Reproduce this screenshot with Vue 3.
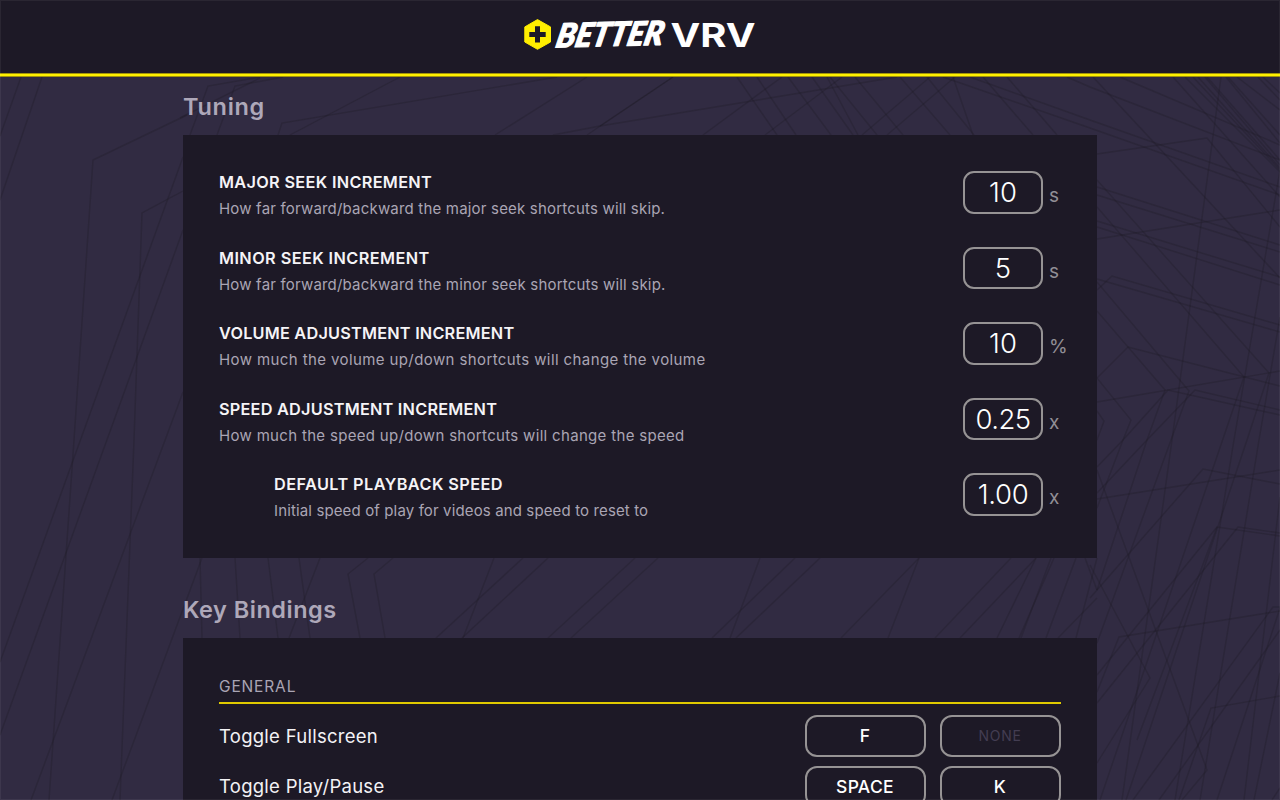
<script setup>
const tuning = [
  { title: 'MAJOR SEEK INCREMENT', text: 'How far forward/backward the major seek shortcuts will skip.', value: '10', unit: 's', k: 'a' },
  { title: 'MINOR SEEK INCREMENT', text: 'How far forward/backward the minor seek shortcuts will skip.', value: '5', unit: 's', k: 'b' },
  { title: 'VOLUME ADJUSTMENT INCREMENT', text: 'How much the volume up/down shortcuts will change the volume', value: '10', unit: '%', k: 'c' },
  { title: 'SPEED ADJUSTMENT INCREMENT', text: 'How much the speed up/down shortcuts will change the speed', value: '0.25', unit: 'x', k: 'd' },
  { title: 'DEFAULT PLAYBACK SPEED', text: 'Initial speed of play for videos and speed to reset to', value: '1.00', unit: 'x', k: 'e', nested: true },
]
const bindings = [
  { name: 'Toggle Fullscreen', keys: ['F', ''] },
  { name: 'Toggle Play/Pause', keys: ['SPACE', 'K'] },
]
const lines = [
  '21,77 0,136', '42,77 0,200', '187,115 93,160 74,440 49,800', '183,191 142,213 134,440 120,800',
  '183,157 0,662', '183,230 0,735', '183,392 31,800', '202,558 112,800',
  '190,135 208,86 260,77', '217,135 235,86 283,77', '400,77 290,135', '180,118 260,78',
  '278,135 282,123 557,77', '587,77 495,135', '673,77 587,135', '553,135 600,126 897,77',
  '600,126 673,77',
  '782,77 703,135', '842,77 765,135', '930,77 862,135', '955,77 887,135',
  '737,77 777,135', '757,77 796,135', '788,77 831,135', '812,77 853,135', '827,77 858,135',
  '830,77 877,135', '855,77 903,135', '900,77 950,135', '927,77 974,135', '953,77 973,135',
  '983,77 1033,135', '1007,77 1057,135', '943,77 1090,128 1280,195', '970,77 1090,120 1280,187',
  '1067,77 1090,87 1280,160', '1093,77 1280,278', '1120,77 1280,145',
  '1097,154 1207,138 1280,227', '1097,187 1280,245', '1097,195 1280,252', '1097,221 1280,277',
  '1097,227 1280,285', '1097,239 1280,210', '1097,290 1112,276 1280,325', '1097,279 1280,332',
  '1097,180 1269,373 1247,440 1126,800', '1097,207 1244,377 1226,430 1100,800',
  '1097,282 1189,391 1171,440 1097,643', '1097,311 1165,390 1147,440 1097,590',
  '1097,378 1131,420 1123,440 1097,508', '1097,411 1104,421 1097,440',
  '1097,378 1128,347 1280,386', '1097,402 1280,371', '1097,467 1123,440 1168,390 1280,415',
  '1097,493 1147,440 1195,390 1280,410', '1221,77 1172,440 1122,800', '1280,170 1234,440 1175,800',
  '1280,317 1259,440 1200,800', '1173,77 1280,197', '1185,77 1280,172', '1193,77 1280,170',
  '1198,77 1280,168', '1205,77 1280,165', '1207,77 1280,160', '1226,77 1280,143', '1228,77 1280,135',
  '1237,77 1280,110', '1258,77 1280,100', '1263,77 1280,93', '1097,499 1280,470',
  '1090,598 1203,469 1280,484', '1097,675 1217,527 1280,536', '1097,703 1238,527 1280,533',
  '1217,527 1137,740', '1085,558 1097,590', '1097,470 1207,770 1182,800', '1090,565 1150,678 1097,763',
  '1097,692 1119,637 1280,611', '1179,800 1211,708 1280,696', '1133,800 1273,607 1280,607',
  '1159,800 1280,630', '1217,800 1280,608', '1280,497 1244,800', '1280,673 1254,800', '1272,800 1280,788',
  '200,558 202,638', '235,558 240,638', '268,558 278,638', '299,558 310,638', '320,558 289,638',
  '368,558 348,574 360,638', '393,558 374,574 385,638', '494,558 463,638', '523,558 436,638',
  '548,558 462,638', '635,558 548,638', '658,558 571,638', '760,558 730,638', '795,558 712,638',
  '820,558 736,638', '919,558 841,638', '919,558 888,638', '1011,558 935,638', '1036,558 960,638',
  '1036,558 997,638', '1054,558 1019,638', '1051,558 1021,638', '1076,558 1046,638',
  '1097,598 1058,638', '1097,558 1076,638',
]
</script>

<template>
  <div class="page">
    <svg class="backdrop" viewBox="0 0 1280 800" aria-hidden="true">
      <polyline v-for="(p, i) in lines" :key="i" :points="p" />
    </svg>

    <header class="top">
      <svg class="logo" viewBox="0 0 240 44" role="img" aria-label="BetterVRV">
        <path d="M17.500 4.600 L30.500 11.900 V27 L17.500 34.300 L4.800 27 V11.900 Z" fill="#ffee00" stroke="#ffee00" stroke-width="1" stroke-linejoin="round" />
        <path d="M15 11.200h5v5.700h5.700v5H20v5.700h-5v-5.700H9.300v-5H15z" fill="#1d1926" />
        <g class="brush" transform="translate(34.500 32.500) rotate(-1.500) skewX(-14)">
          <text x="0" y="0" textLength="107" lengthAdjust="spacingAndGlyphs">BETTER</text>
        </g>
        <text class="wide" x="150.500" y="31.500" textLength="85" lengthAdjust="spacingAndGlyphs">VRV</text>
      </svg>
    </header>

    <main class="content">
      <h2 class="heading h-tuning">Tuning</h2>
      <section class="panel tuning">
        <div v-for="r in tuning" :key="r.title" class="row" :class="{ nested: r.nested }">
          <div class="copy">
            <div class="title" :class="'t-' + r.k">{{ r.title }}</div>
            <div class="text" :class="'d-' + r.k">{{ r.text }}</div>
          </div>
          <div class="field">
            <div class="value" :class="'v-' + r.k">{{ r.value }}</div>
            <span class="unit">{{ r.unit }}</span>
          </div>
        </div>
      </section>

      <h2 class="heading h-keys">Key Bindings</h2>
      <section class="panel keys">
        <h3 class="group">GENERAL</h3>
        <div v-for="b in bindings" :key="b.name" class="binding">
          <span class="name">{{ b.name }}</span>
          <div class="key" v-for="(k, i) in b.keys" :key="i" :class="{ none: !k }">{{ k || 'NONE' }}</div>
        </div>
      </section>
    </main>
    <div class="edge"></div>
  </div>
</template>

<style>
html, body { margin: 0; background: #312b42; overflow: hidden; }
</style>

<style scoped>
.page {
  position: relative;
  width: 1280px;
  height: 800px;
  overflow: hidden;
  background: #312b42;
  font-family: Inter, "Open Sans", sans-serif;
  color: #fff;
}
.backdrop { position: absolute; inset: 0; width: 1280px; height: 800px; }
.backdrop polyline { fill: none; stroke: #1d1926; stroke-opacity: 0.3; stroke-width: 1.4; }
.edge { position: absolute; inset: 0; border: 1px solid rgba(255, 255, 255, 0.06); pointer-events: none; }
.top {
  position: relative;
  box-sizing: border-box;
  height: 77px;
  padding-top: 15px;
  display: flex;
  justify-content: center;
  align-items: flex-start;
  background: linear-gradient(#1d1926 73px, #a0940c 73px, #a0940c 74px, #fff000 74px, #fff000 76px, #a0940c 76px);
}
.logo { width: 240px; height: 44px; overflow: visible; }
.brush text { font: italic 900 33px Lato, sans-serif; fill: #fff; stroke: #fff; stroke-width: 1.2; stroke-linejoin: round; }
.wide { font: 700 32px Inter, sans-serif; fill: #fff; }
.content { position: relative; width: 914px; margin: 0 auto; }
.heading { margin: 0; font-size: 23.5px; line-height: 28px; font-weight: 600; color: #aea8b9; }
.h-tuning { padding: 16px 0 14px; letter-spacing: 0.7px; }
.h-keys { padding: 38px 0 14.5px; letter-spacing: 0.5px; }
.panel { box-sizing: border-box; background: #1d1926; padding: 0 36.5px 0 36px; }
.tuning { height: 422.5px; padding-top: 36px; }
.row { display: flex; justify-content: space-between; height: 75.5px; }
.nested { padding-left: 55px; }
.title { margin-top: 1px; font-size: 16.3px; line-height: 20px; font-weight: 600; color: #f5f4f7; white-space: nowrap; }
.t-a { letter-spacing: 0.32px; }
.t-b { letter-spacing: 0.42px; }
.t-c { letter-spacing: 0.21px; }
.t-d { letter-spacing: 0.22px; }
.t-e { letter-spacing: 0.42px; }
.text { margin-top: 7px; font-size: 15px; line-height: 19px; color: #aaa5b4; white-space: nowrap; }
.d-a, .d-b { letter-spacing: 0.19px; }
.d-c { letter-spacing: 0.4px; }
.d-d { letter-spacing: 0.32px; }
.d-e { letter-spacing: 0.13px; }
.field { display: flex; width: 97.5px; gap: 6px; }
.value {
  box-sizing: border-box;
  flex: none;
  width: 80px;
  height: 42.5px;
  border: 2px solid #969394;
  border-radius: 11px;
  font-size: 27.5px;
  line-height: 38px;
  font-weight: 300;
  text-align: center;
}
.v-d { letter-spacing: -0.5px; }
.v-e { letter-spacing: -0.3px; }
.unit { padding-top: 13px; font-size: 19px; line-height: 24px; color: #918e95; }
.keys { height: 200px; padding-top: 38.5px; }
.group {
  margin: 0;
  height: 25px;
  font-size: 15.5px;
  line-height: 20px;
  font-weight: 400;
  letter-spacing: 0.85px;
  color: #aaa5b4;
  border-bottom: 2px solid #dfca00;
}
.binding { display: flex; align-items: center; gap: 14px; height: 41.5px; margin-top: 11.5px; }
.binding + .binding { margin-top: 9px; }
.name { flex: 1; font-size: 18.5px; letter-spacing: 0.27px; color: #f3f2f5; }
.key {
  box-sizing: border-box;
  width: 121px;
  height: 41.5px;
  border: 2px solid #969394;
  border-radius: 12px;
  font-size: 17.5px;
  line-height: 38px;
  font-weight: 500;
  letter-spacing: 0.3px;
  text-align: center;
}
.none { font-size: 14px; font-weight: 400; letter-spacing: 0.7px; color: #433d52; }
</style>
